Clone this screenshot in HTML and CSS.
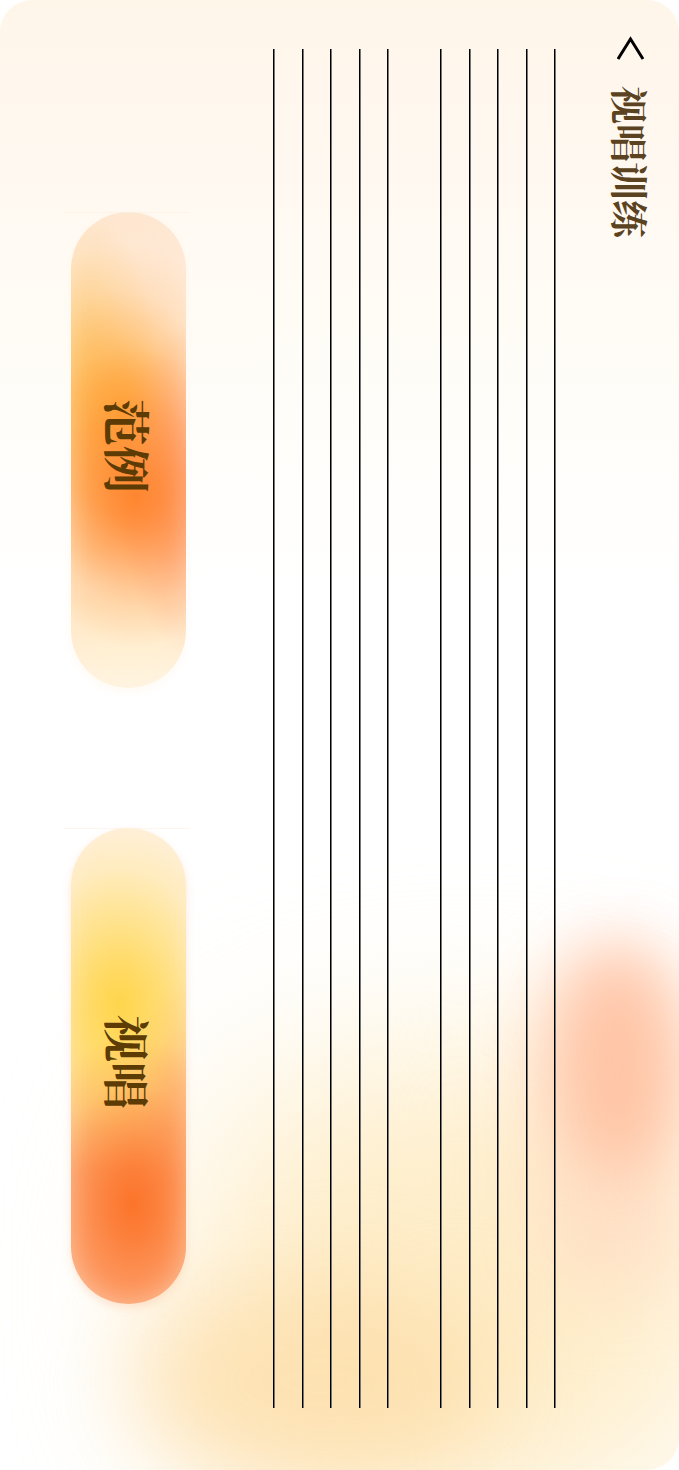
FILE: index.html
```html
<!DOCTYPE html>
<html lang="zh-CN">
<head>
<meta charset="utf-8">
<meta name="viewport" content="width=device-width, initial-scale=1">
<title>视唱训练</title>
<link rel="stylesheet" href="styles.css">
</head>
<body>
<div class="page">
  <div class="glow" aria-hidden="true">
    <span class="blob blob-cream"></span>
    <span class="blob blob-amber"></span>
    <span class="blob blob-peach"></span>
    <span class="blob blob-coral"></span>
  </div>
  <header class="bar">
    <button class="back" type="button" aria-label="返回">
      <svg viewBox="0 0 28 26" width="28" height="26" fill="none" stroke="#000" stroke-width="3"><path d="M1 24 13.500 4 26 24"/></svg>
    </button>
    <h1 class="title">视唱训练</h1>
  </header>
  <main class="score">
    <div class="stave"><i class="line"></i><i class="line"></i><i class="line"></i><i class="line"></i><i class="line"></i></div>
    <div class="stave"><i class="line"></i><i class="line"></i><i class="line"></i><i class="line"></i><i class="line"></i></div>
  </main>
  <nav class="actions">
    <button class="pill pill-demo" type="button">范例</button>
    <button class="pill pill-sing" type="button">视唱</button>
  </nav>
</div>
</body>
</html>
```
FILE: styles.css
```css
* { box-sizing: border-box; }
body {
  margin: 0;
  background: #fff;
  font-family: "Noto Serif CJK SC", "Noto Sans CJK SC", serif;
}
.page {
  position: relative;
  display: flex;
  flex-direction: row-reverse;
  min-height: 100vh;
  padding: 0 24px 0 71px;
  border-radius: 32px;
  overflow: hidden;
  background: linear-gradient(#fff6ea 0, #fff8f0 11%, #fffcf6 22%, #fff 40%);
}

/* Soft colour washes behind the score */
.glow { position: absolute; inset: 0; }
.blob { position: absolute; border-radius: 50%; }
.blob-cream { left: 28%; right: -8%; top: 72%; bottom: -3%; background: #feedc8; filter: blur(90px); border-radius: 40%; }
.blob-amber { left: 20%; right: 26%; top: 87%; bottom: -1%; background: #fddeaa; filter: blur(46px); opacity: .8; }
.blob-peach { left: 80%; right: 0; top: 66%; bottom: 12%; background: #ffdcc4; filter: blur(40px); border-radius: 60px; opacity: .8; }
.blob-coral { left: 82%; right: 0; top: 64%; bottom: 20%; background: #ffb794; filter: blur(32px); opacity: .7; }

.bar {
  position: relative;
  display: flex;
  flex-direction: column;
  align-items: center;
  gap: 25px;
  width: 48px;
  padding-top: 35px;
}
.back { display: block; padding: 0; border: 0; background: none; cursor: pointer; }
.back svg { display: block; }
.title {
  margin: 0;
  writing-mode: vertical-rl;
  text-orientation: sideways;
  font-size: 38px;
  line-height: 44px;
  font-weight: 700;
  color: #5b4220;
}

.score {
  position: relative;
  flex: 1;
  display: flex;
  gap: 51px;
  margin: 49px 51px 62px 87px;
}
.stave { flex: 1; display: flex; justify-content: space-between; }
.line { width: 2px; background: linear-gradient(90deg, #000 50%, #777 50%); }

.actions {
  position: relative;
  display: flex;
  flex-direction: column;
  gap: 140px;
  width: 115px;
  padding: 212px 0 166px;
}
.pill {
  position: relative;
  flex: 1;
  padding: 0 0 8px;
  border: 0;
  border-radius: 58px;
  writing-mode: vertical-rl;
  text-orientation: sideways;
  font-family: inherit;
  font-size: 47px;
  line-height: 56px;
  font-weight: 700;
  color: #5c3b04;
  text-align: center;
  cursor: pointer;
}
.pill::before {
  content: "";
  position: absolute;
  top: 0;
  left: -7px;
  right: -4px;
  height: 1px;
  background: #fdeedd;
  opacity: .5;
}
.pill-demo {
  background:
    radial-gradient(ellipse 120px 150px at 56% 60%, #ff7d24e0 0, #ff7d24b8 20%, #ff7d2470 45%, #ff7d2428 72%, #ff7d2400 100%),
    radial-gradient(ellipse 80px 170px at 110% 58%, #ff9a78 0, #ff9a7899 35%, #ff9a7838 70%, #ff9a7800 100%),
    radial-gradient(ellipse 120px 170px at 46% 42%, #ffa22ee0 0, #ffa22eb8 20%, #ffa22e70 45%, #ffa22e28 72%, #ffa22e00 100%),
    radial-gradient(ellipse 90px 200px at 0 38%, #fdc860cc 0, #fdc86088 35%, #fdc86030 70%, #fdc86000 100%),
    linear-gradient(#fee6cf, #ffecdc 25%, #ffe0c0 60%, #ffe6c0 82%, #fff6e2);
  box-shadow: 0 4px 8px #fff3e066, inset 0 0 24px #ffeedd66;
}
.pill-sing {
  background:
    radial-gradient(ellipse 110px 170px at 54% 79%, #fc742a 0, #fc742acc 20%, #fc742a78 45%, #fc742a28 72%, #fc742a00 100%),
    radial-gradient(ellipse 80px 150px at 110% 62%, #ffa468cc 0, #ffa46888 35%, #ffa46828 70%, #ffa46800 100%),
    radial-gradient(ellipse 130px 190px at 42% 37%, #ffd54c 0, #ffd54cc8 20%, #ffd54c78 45%, #ffd54c28 72%, #ffd54c00 100%),
    linear-gradient(#fff1dc, #ffefc8 25%, #ffe8a8 45%, #fed090 58%, #fcac78 72%, #fdae82);
  box-shadow: 0 4px 8px #fba87444, inset 0 0 24px #ffeedd66;
}
```
